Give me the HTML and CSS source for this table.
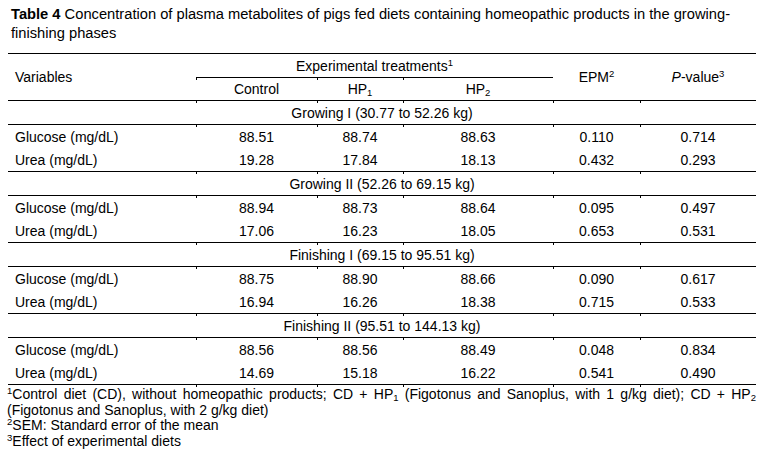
FILE: index.html
```html
<!DOCTYPE html>
<html lang="en">
<head>
<meta charset="utf-8">
<title>Table 4</title>
<link rel="stylesheet" href="styles.css">
</head>
<body>
<div class="page">
  <p class="title"><b>Table 4</b> Concentration of plasma metabolites of pigs fed diets containing homeopathic products in the growing-finishing phases</p>
  <table class="data">
    <colgroup>
      <col class="c-var"><col class="c-ctl"><col class="c-hp1"><col class="c-hp2"><col class="c-epm"><col class="c-p">
    </colgroup>
    <thead>
      <tr class="h1">
        <th class="var" rowspan="2">Variables</th>
        <th class="exp" colspan="3">Experimental treatments<sup>1</sup></th>
        <th rowspan="2" class="last">EPM<sup>2</sup></th>
        <th rowspan="2" class="last"><i>P</i>-value<sup>3</sup></th>
      </tr>
      <tr class="h2">
        <th class="tk">Control</th>
        <th class="tk">HP<sub>1</sub></th>
        <th class="tk">HP<sub>2</sub></th>
      </tr>
    </thead>
    <tbody>
      <tr class="sec"><td colspan="6" class="ticks">Growing I (30.77 to 52.26 kg)</td></tr>
      <tr class="row first"><td class="var">Glucose (mg/dL)</td><td class="tk">88.51</td><td class="tk">88.74</td><td class="tk">88.63</td><td class="tk">0.110</td><td class="tk">0.714</td></tr>
      <tr class="row end"><td class="var">Urea (mg/dL)</td><td>19.28</td><td>17.84</td><td>18.13</td><td>0.432</td><td>0.293</td></tr>

      <tr class="sec"><td colspan="6" class="ticks">Growing II (52.26 to 69.15 kg)</td></tr>
      <tr class="row first"><td class="var">Glucose (mg/dL)</td><td class="tk">88.94</td><td class="tk">88.73</td><td class="tk">88.64</td><td class="tk">0.095</td><td class="tk">0.497</td></tr>
      <tr class="row end"><td class="var">Urea (mg/dL)</td><td>17.06</td><td>16.23</td><td>18.05</td><td>0.653</td><td>0.531</td></tr>

      <tr class="sec"><td colspan="6" class="ticks">Finishing I (69.15 to 95.51 kg)</td></tr>
      <tr class="row first"><td class="var">Glucose (mg/dL)</td><td class="tk">88.75</td><td class="tk">88.90</td><td class="tk">88.66</td><td class="tk">0.090</td><td class="tk">0.617</td></tr>
      <tr class="row end"><td class="var">Urea (mg/dL)</td><td>16.94</td><td>16.26</td><td>18.38</td><td>0.715</td><td>0.533</td></tr>

      <tr class="sec"><td colspan="6" class="ticks">Finishing II (95.51 to 144.13 kg)</td></tr>
      <tr class="row first"><td class="var">Glucose (mg/dL)</td><td class="tk">88.56</td><td class="tk">88.56</td><td class="tk">88.49</td><td class="tk">0.048</td><td class="tk">0.834</td></tr>
      <tr class="row end"><td class="var">Urea (mg/dL)</td><td>14.69</td><td>15.18</td><td>16.22</td><td>0.541</td><td>0.490</td></tr>
    </tbody>
  </table>
  <div class="notes ticks">
    <p class="just"><sup>1</sup>Control diet (CD), without homeopathic products; CD + HP<sub>1</sub> (Figotonus and Sanoplus, with 1 g/kg diet); CD + HP<sub>2</sub> (Figotonus and Sanoplus, with 2 g/kg diet)</p>
    <p><sup>2</sup>SEM: Standard error of the mean</p>
    <p><sup>3</sup>Effect of experimental diets</p>
  </div>
</div>
</body>
</html>
```

FILE: styles.css
```css
html, body {
  margin: 0;
  padding: 0;
  background: #ffffff;
}

body {
  font-family: "Liberation Sans", Arial, sans-serif;
  color: #000000;
}

.page {
  width: 748px;
  padding: 5px 8px 0 8px;
}

.title {
  margin: 0 0 10px 3px;
  font-size: 14.7px;
  line-height: 19px;
}

.title b {
  font-weight: bold;
}

sup, sub {
  font-size: 9.5px;
  line-height: 0;
  position: relative;
  vertical-align: baseline;
}

sup {
  top: -5px;
}

sub {
  top: 2px;
}

.data {
  width: 748px;
  border-collapse: collapse;
  table-layout: fixed;
  font-size: 14px;
  border-top: 1px solid #000000;
}

.c-var { width: 188px; }
.c-ctl { width: 121px; }
.c-hp1 { width: 86px; }
.c-hp2 { width: 150px; }
.c-epm { width: 87px; }
.c-p { width: 116px; }

.data th,
.data td {
  padding: 0;
  font-weight: normal;
  text-align: center;
  vertical-align: middle;
  line-height: 16px;
}

.data .var {
  text-align: left;
  padding-left: 7px;
}

.h1 th {
  height: 23px;
}

.h1 .exp,
.h1 .var,
.h1 .last {
  border-bottom: 1px solid #000000;
}

.h2 th {
  height: 22px;
  border-bottom: 1px solid #000000;
}

.sec td {
  height: 23px;
  border-bottom: 1px solid #000000;
}

.row td {
  height: 23px;
}

.row.end td {
  border-bottom: 1px solid #000000;
}

.tk {
  background-image: linear-gradient(#000000, #000000);
  background-repeat: no-repeat;
  background-size: 1px 2px;
  background-position: 0 0;
}

.ticks {
  background-image:
    linear-gradient(#000000, #000000),
    linear-gradient(#000000, #000000),
    linear-gradient(#000000, #000000),
    linear-gradient(#000000, #000000),
    linear-gradient(#000000, #000000);
  background-repeat: no-repeat;
  background-size: 1px 2px;
  background-position: 188px 0, 309px 0, 395px 0, 545px 0, 632px 0;
}

.notes {
  font-size: 14px;
  line-height: 15.5px;
  padding-top: 2px;
}

.notes p {
  margin: 0 0 0 -1px;
}

.notes .just {
  text-align: justify;
}
```
